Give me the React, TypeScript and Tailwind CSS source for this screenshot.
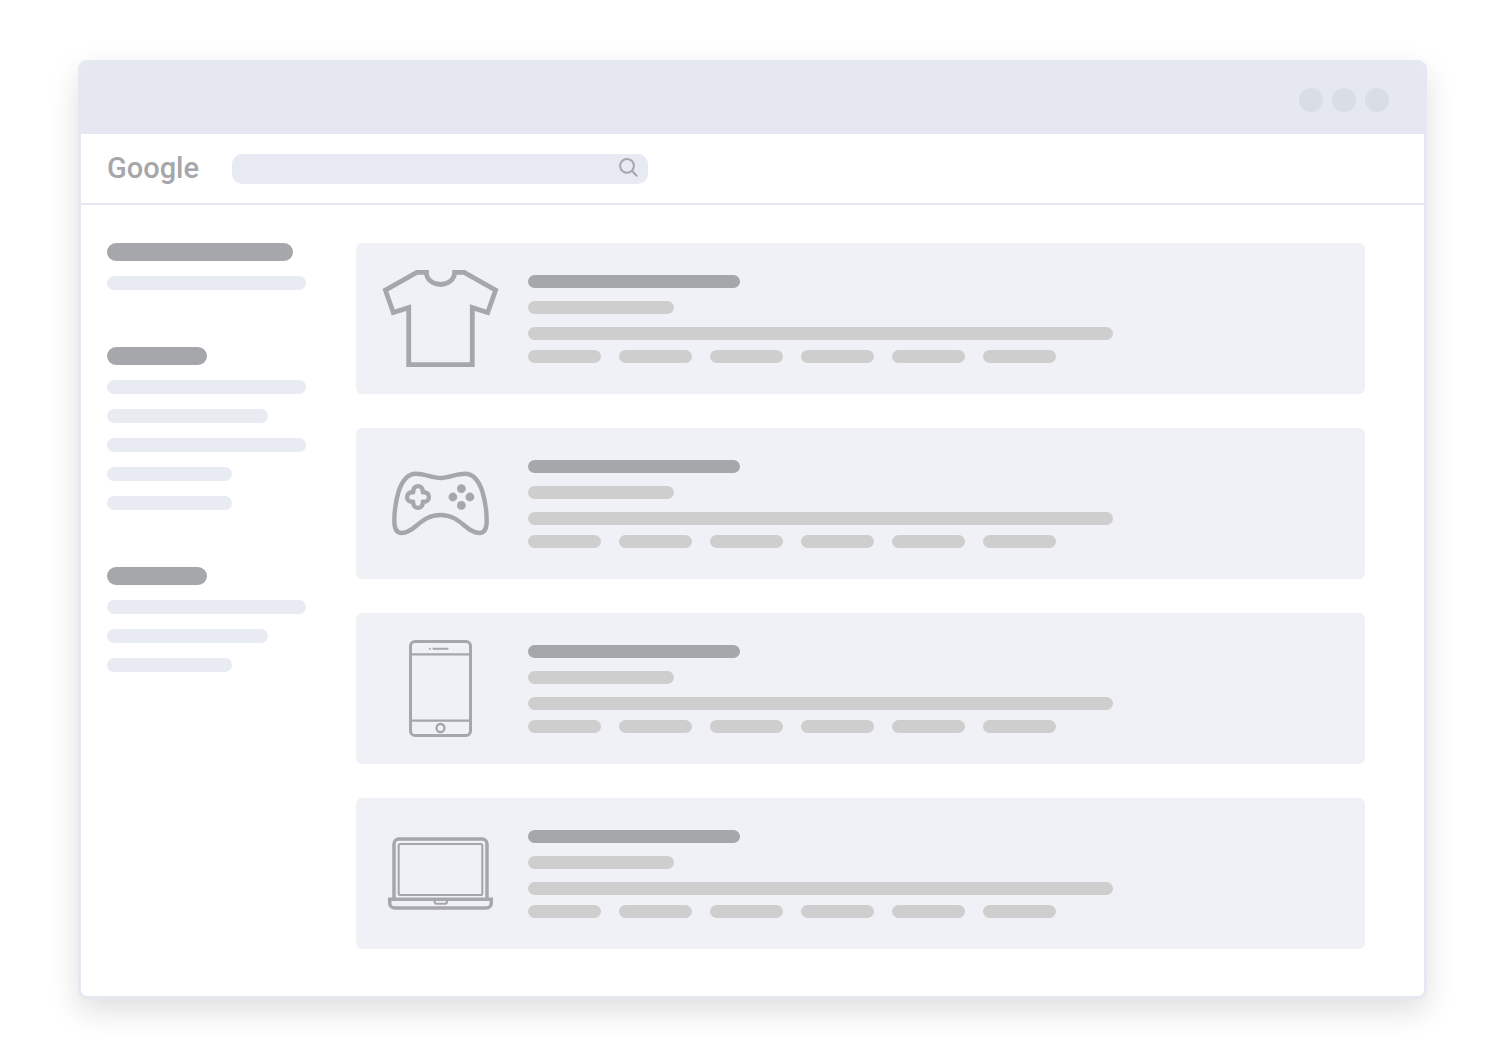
import type { ReactNode } from 'react'
import { clsx } from 'clsx'

interface Result {
  id: string
  icon: ReactNode
}

interface FilterGroup {
  id: string
  title: string
  lines: string[]
}

const filterGroups: FilterGroup[] = [
  { id: 'summary', title: 'w-[186px]', lines: ['w-full'] },
  { id: 'category', title: 'w-[100px]', lines: ['w-full', 'w-[161px]', 'w-full', 'w-[125px]', 'w-[125px]'] },
  { id: 'price', title: 'w-[100px]', lines: ['w-full', 'w-[161px]', 'w-[125px]'] },
]

function ProductIcon({ children }: { children: ReactNode }) {
  return (
    <svg
      viewBox="0 0 117 101"
      className="w-[117px] h-[101px] shrink-0 text-[#a6a7ab]"
      fill="none"
      stroke="currentColor"
      aria-hidden="true"
    >
      {children}
    </svg>
  )
}

function ShirtIcon() {
  return (
    <ProductIcon>
      <path
        strokeWidth="4.8"
        d="M34.8 4.4H44.4A14.1 12.1 0 0 0 72.6 4.4H82.2L113.6 22.2L105.7 44.6L90.3 39.6V96.6H26.7V39.6L11.3 44.6L3.4 22.2Z"
      />
    </ProductIcon>
  )
}

function GamepadIcon() {
  return (
    <ProductIcon>
      <path
        strokeWidth="4.4"
        d="M58.5 25C50 24.6 42 20.8 34 20.8C25 20.8 20 28 16.5 39C13.5 49 12.3 60 12.3 68C12.3 76 14.5 80 19.7 80C33 80 38 62 58.5 62C79 62 84 80 97.3 80C102.5 80 104.7 76 104.7 68C104.7 60 103.5 49 100.5 39C97 28 92 20.8 83 20.8C75 20.8 67 24.6 58.5 25Z"
      />
      <path
        strokeWidth="4.4"
        strokeLinejoin="round"
        d="M31.2 39.2V37.9a4.8 4.8 0 0 1 9.6 0V39.2H42.1a4.8 4.8 0 0 1 0 9.6H40.8V50.1a4.8 4.8 0 0 1 -9.6 0V48.8H29.9a4.8 4.8 0 0 1 0 -9.6Z"
      />
      <g fill="currentColor" stroke="none">
        <circle cx="79.4" cy="35.6" r="4.4" />
        <circle cx="70.9" cy="44" r="4.4" />
        <circle cx="87.9" cy="44" r="4.4" />
        <circle cx="79.4" cy="52.4" r="4.4" />
      </g>
    </ProductIcon>
  )
}

function PhoneIcon() {
  return (
    <ProductIcon>
      <rect x="28.5" y="3.5" width="60" height="94" rx="4.6" strokeWidth="3" />
      <path strokeWidth="2.2" d="M28.5 16.4H88.5M28.5 82.6H88.5" />
      <path strokeWidth="2" strokeLinecap="round" d="M47.8 10.7H47.9M51.4 10.7H65.6" />
      <circle cx="58.5" cy="90" r="4" strokeWidth="2.3" />
    </ProductIcon>
  )
}

function LaptopIcon() {
  return (
    <ProductIcon>
      <path strokeWidth="3.5" d="M12 76V21a5 5 0 0 1 5 -5H100a5 5 0 0 1 5 5V76" />
      <rect x="16.7" y="21" width="83.6" height="51" rx="1.5" strokeWidth="2.1" />
      <path strokeWidth="3.5" d="M7.7 76.3H109.3V80a5 5 0 0 1 -5 5H12.7a5 5 0 0 1 -5 -5Z" />
      <path strokeWidth="2.1" d="M52.6 77V78.4a2.4 2.4 0 0 0 2.4 2.4H62.6a2.4 2.4 0 0 0 2.4 -2.4V77" />
    </ProductIcon>
  )
}

const results: Result[] = [
  { id: 'shirt', icon: <ShirtIcon /> },
  { id: 'gamepad', icon: <GamepadIcon /> },
  { id: 'phone', icon: <PhoneIcon /> },
  { id: 'laptop', icon: <LaptopIcon /> },
]

function Bar({ className }: { className: string }) {
  return <div className={clsx('h-[13px] max-w-full rounded-full', className)} />
}

function ResultCard({ icon }: { icon: ReactNode }) {
  return (
    <article className="flex items-center gap-[29px] rounded-md bg-[#f0f1f6] pl-[26px] pr-6 py-[25px]">
      {icon}
      <div className="flex-1 min-w-0">
        <Bar className="w-[212px] bg-[#a6a7ab]" />
        <Bar className="mt-[13px] w-[146px] bg-[#cecece]" />
        <Bar className="mt-[13px] w-[585px] bg-[#cecece]" />
        <div className="mt-[10px] flex gap-[18px]">
          {[0, 1, 2, 3, 4, 5].map((n) => (
            <Bar key={n} className="w-[73px] bg-[#cecece]" />
          ))}
        </div>
      </div>
    </article>
  )
}

function TitleBar() {
  return (
    <div className="flex justify-end gap-[9px] bg-[#e5e8f1] pt-[25px] pb-[22px] pr-[35px]">
      {[0, 1, 2].map((n) => (
        <span key={n} className="size-6 rounded-full bg-[#d9dde5]" />
      ))}
    </div>
  )
}

function SearchHeader() {
  return (
    <header className="flex items-start border-b-2 border-[#e5e8f1] pl-[26px] pr-6 pt-5 pb-[19px]">
      <a
        href="#"
        className="w-[125px] shrink-0 font-['Roboto',sans-serif] text-[29px] leading-7 font-medium text-[#a6a7ab]"
      >
        Google
      </a>
      <form role="search" className="relative w-[416px]" onSubmit={(e) => e.preventDefault()}>
        <input
          type="search"
          aria-label="Search"
          className="block w-full h-[30px] rounded-[10px] bg-[#e7eaf3] pl-3 pr-10 font-['Roboto',sans-serif] text-sm text-[#a6a7ab] outline-none"
        />
        <button type="submit" aria-label="Submit search" className="absolute right-[10px] top-[3px]">
          <svg viewBox="0 0 20 20" className="size-5 text-[#a6a7ab]" fill="none" stroke="currentColor" strokeWidth="2">
            <circle cx="9" cy="8.8" r="6.9" />
            <path strokeLinecap="round" d="M14 13.8L18.6 18.8" />
          </svg>
        </button>
      </form>
    </header>
  )
}

function Sidebar() {
  return (
    <aside className="w-[199px] shrink-0 flex flex-col gap-[57px]">
      {filterGroups.map((group) => (
        <div key={group.id} className="flex flex-col gap-[15px]">
          <div className={clsx('h-[18px] rounded-full bg-[#a6a7ab]', group.title)} />
          {group.lines.map((width, i) => (
            <div key={i} className={clsx('h-[14px] rounded-full bg-[#e8ebf2]', width)} />
          ))}
        </div>
      ))}
    </aside>
  )
}

export default function App() {
  return (
    <div className="min-h-screen bg-white pt-[60px] pb-[58px] pl-[78px] pr-[77px]">
      <div className="overflow-hidden rounded-[9px] border-[3px] border-[#e5e8f1] bg-white shadow-[0_12px_30px_rgba(0,0,0,0.13)]">
        <TitleBar />
        <SearchHeader />
        <div className="flex items-start gap-[50px] pt-[38px] pb-[47px] pl-[26px] pr-[59px]">
          <Sidebar />
          <main className="flex-1 min-w-0 flex flex-col gap-[34px]">
            {results.map((result) => (
              <ResultCard key={result.id} icon={result.icon} />
            ))}
          </main>
        </div>
      </div>
    </div>
  )
}
